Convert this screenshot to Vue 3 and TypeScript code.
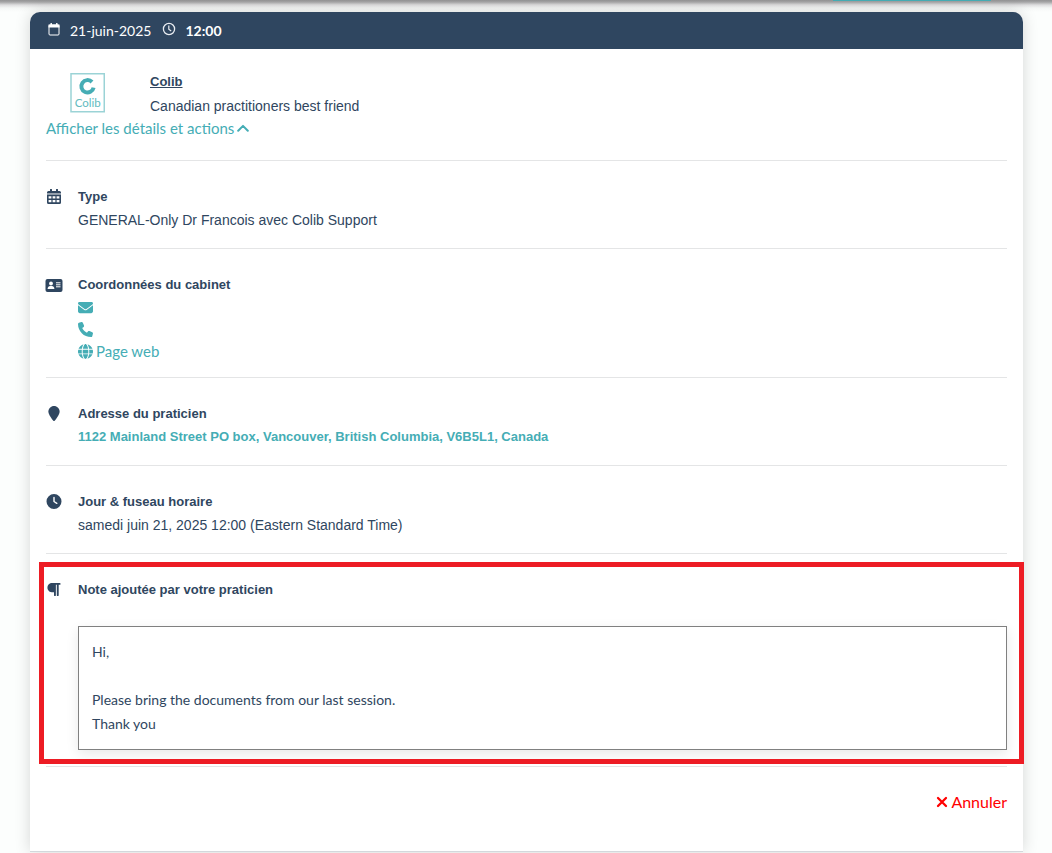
<script setup lang="ts">
import { ref } from 'vue'

interface Contact {
  kind: 'mail' | 'phone' | 'web'
  label: string
  text: string
}

const contacts: Contact[] = [
  { kind: 'mail', label: 'Courriel', text: '' },
  { kind: 'phone', label: 'Téléphone', text: '' },
  { kind: 'web', label: 'Page web', text: 'Page web' },
]

const open = ref(true)
const noteLines: string[] = ['Hi,', '', 'Please bring the documents from our last session.', 'Thank you']
</script>

<template>
  <div class="page">
    <div class="topbar"><span class="tab"></span></div>
    <main class="card">
      <header class="card-head">
        <svg class="head-cal" viewBox="0 0 12 13" aria-hidden="true">
          <rect x="1" y="2" width="10" height="10" rx="1" fill="none" stroke="#fff" stroke-width="1" />
          <path d="M0.5 1.500h11v3h-11zM2.500 0h1.400v2H2.500zM8.100 0h1.400v2H8.100z" fill="#fff" />
        </svg>
        <span class="date">21-juin-2025</span>
        <svg class="head-clock" viewBox="0 0 14 14" aria-hidden="true">
          <circle cx="7" cy="7" r="5.600" fill="none" stroke="#e9edf2" stroke-width="1.300" />
          <path d="M6.800 3.500v3.800l2.400 1.600" fill="none" stroke="#e9edf2" stroke-width="1.200" />
        </svg>
        <span class="time">12:00</span>
      </header>

      <div class="card-body">
        <section class="intro">
          <div class="who">
            <svg class="logo" viewBox="0 0 35 40" role="img" aria-label="Colib">
              <rect x="1" y="0.75" width="33.250" height="38" fill="#fff" stroke="#9bd3d6" stroke-width="1.500" />
              <path d="M22 9A6.200 6.200 0 1 0 23.600 14.600" fill="none" stroke="#46adb5" stroke-width="4" />
              <text x="17.800" y="33.500" text-anchor="middle" font-family="Lato, sans-serif" font-size="11.500" fill="#62bbc0">Colib</text>
            </svg>
            <div>
              <a class="name" href="#colib">Colib</a>
              <p class="value">Canadian practitioners best friend</p>
            </div>
          </div>
          <button class="toggle" type="button" :aria-expanded="open" @click="open = !open">
            Afficher les détails et actions
            <svg viewBox="0 0 12 8" class="chevron" aria-hidden="true"><path d="M1.200 6.700 6 1.900l4.800 4.800" fill="none" stroke="currentColor" stroke-width="2" stroke-linecap="round" stroke-linejoin="round" /></svg>
          </button>
        </section>

        <section class="row">
          <svg class="icon" viewBox="0 0 14 15" aria-hidden="true">
            <path fill="currentColor" fill-rule="evenodd" d="M3 0.800a1 1 0 0 1 2 0V2h4V0.800a1 1 0 0 1 2 0V2h1.500A1.500 1.500 0 0 1 14 3.500V4H0V3.500A1.500 1.500 0 0 1 1.500 2H3zM0 5.800h14v7.700a1.500 1.500 0 0 1-1.500 1.500h-11A1.500 1.500 0 0 1 0 13.500zM1.600 7.200v2.300h2.800v-2.300zM5.600 7.200v2.300h2.800v-2.300zM9.600 7.200v2.300h2.800v-2.300zM1.600 10.900v2.300h2.800v-2.300zM5.600 10.900v2.300h2.800v-2.300zM9.600 10.900v2.300h2.800v-2.300z" />
            <path fill="currentColor" opacity="0.500" d="M0 4h14v1.800H0z" />
          </svg>
          <div class="content">
            <h2>Type</h2>
            <p class="value">GENERAL-Only Dr Francois avec Colib Support</p>
          </div>
        </section>

        <section class="row contact">
          <svg class="icon wide" viewBox="0 0 18 14" aria-hidden="true">
            <rect x="0.500" y="0.500" width="17" height="13" rx="2" fill="currentColor" />
            <circle cx="6" cy="5" r="1.900" fill="#fff" />
            <path d="M2.600 10.500c0-1.800 1.200-2.900 2.600-2.900h1.600c1.400 0 2.600 1.100 2.600 2.900z" fill="#fff" />
            <path d="M11 4.300h4.500M11 6.300h4.500M11 8.300h4.500" stroke="#fff" stroke-width="1" />
          </svg>
          <div class="content">
            <h2>Coordonnées du cabinet</h2>
            <ul>
              <li v-for="c in contacts" :key="c.kind">
                <a :href="'#' + c.kind" :aria-label="c.label">
                  <svg class="mini" viewBox="0 0 512 512" aria-hidden="true">
                    <path v-if="c.kind === 'mail'" fill="currentColor" d="M48 64C21.500 64 0 85.500 0 112c0 15.100 7.100 29.300 19.200 38.400l217.600 163.200c11.400 8.500 27 8.500 38.400 0l217.600-163.200c12.100-9.100 19.200-23.300 19.200-38.400 0-26.500-21.500-48-48-48H48zM0 176v208c0 35.300 28.700 64 64 64h384c35.300 0 64-28.700 64-64V176L294.400 339.200c-22.800 17.100-54 17.100-76.800 0L0 176z" />
                    <path v-else-if="c.kind === 'phone'" fill="currentColor" d="M164.900 24.600c-7.700-18.600-28-28.500-47.400-23.200l-88 24C12.100 30.200 0 46 0 64c0 247.400 200.600 448 448 448 18 0 33.800-12.100 38.600-29.500l24-88c5.300-19.400-4.600-39.700-23.200-47.400l-96-40c-16.300-6.800-35.200-2.100-46.300 11.600L304.700 368C234.300 334.700 177.300 277.700 144 207.300l49.300-40.300c13.700-11.200 18.400-30 11.600-46.300l-40-96z" />
                    <path v-else fill="currentColor" d="M352 256c0 22.200-1.200 43.600-3.300 64H163.300c-2.200-20.400-3.300-41.800-3.300-64s1.200-43.600 3.300-64h185.400c2.200 20.400 3.300 41.800 3.300 64zm28.800-64h123.100c5.300 20.500 8.100 41.900 8.100 64s-2.800 43.500-8.100 64H380.800c2.100-20.600 3.200-42 3.200-64s-1.100-43.400-3.200-64zm112.600-32H376.700c-10-63.900-29.800-117.400-55.300-151.600 78.300 20.700 142 77.500 172 151.600zm-149.100 0H167.700c6.100-36.400 15.500-68.600 27-94.700 10.500-23.600 22.200-40.700 33.500-51.500C239.400 3.200 248.700 0 256 0s16.600 3.200 27.800 13.800c11.300 10.800 23 27.900 33.500 51.500 11.600 26 20.900 58.200 27 94.700zm-209 0H18.600C48.600 85.900 112.200 29.100 190.600 8.400 165.100 42.600 145.300 96.100 135.300 160zM8.100 192h123.100c-2.100 20.600-3.200 42-3.200 64s1.100 43.400 3.200 64H8.100C2.800 299.500 0 278.100 0 256s2.800-43.500 8.100-64zm186.600 254.600c-11.600-26-20.900-58.200-27-94.600h176.600c-6.100 36.400-15.500 68.600-27 94.600-10.500 23.600-22.200 40.700-33.500 51.500C272.600 508.800 263.300 512 256 512s-16.600-3.200-27.800-13.800c-11.300-10.800-23-27.900-33.500-51.600zM135.300 352c10 63.900 29.800 117.400 55.300 151.600C112.200 482.900 48.600 426.100 18.600 352h116.700zm358.100 0c-30 74.100-93.600 130.900-171.900 151.600 25.500-34.200 45.200-87.700 55.300-151.600h116.600z" />
                  </svg>
                  {{ c.text }}
                </a>
              </li>
            </ul>
          </div>
        </section>

        <section class="row">
          <svg class="icon" viewBox="0 0 384 512" aria-hidden="true"><path fill="currentColor" d="M384 192c0 87.400-117 243-168.300 307.200-12.300 15.300-35.100 15.300-47.400 0C117 435 0 279.400 0 192 0 86 86 0 192 0s192 86 192 192z" /></svg>
          <div class="content">
            <h2>Adresse du praticien</h2>
            <a class="address" href="#map">1122 Mainland Street PO box, Vancouver, British Columbia, V6B5L1, Canada</a>
          </div>
        </section>

        <section class="row">
          <svg class="icon" viewBox="0 0 512 512" aria-hidden="true"><path fill="currentColor" fill-rule="evenodd" d="M256 0a256 256 0 1 1 0 512 256 256 0 1 1 0-512zm-24 120v136c0 8 4 15.500 10.700 20l96 64c11 7.400 25.900 4.400 33.300-6.700s4.400-25.900-6.700-33.300L280 243.200V120c0-13.300-10.700-24-24-24s-24 10.700-24 24z" /></svg>
          <div class="content">
            <h2>Jour &amp; fuseau horaire</h2>
            <p class="value">samedi juin 21, 2025 12:00 (Eastern Standard Time)</p>
          </div>
        </section>

        <section class="row note">
          <svg class="icon" viewBox="0 0 448 512" aria-hidden="true"><path fill="currentColor" d="M192 32h224c17.700 0 32 14.300 32 32s-14.300 32-32 32h-32v352c0 17.700-14.300 32-32 32s-32-14.300-32-32V96h-32v352c0 17.700-14.300 32-32 32s-32-14.300-32-32v-96h-32C71.600 352 0 280.400 0 192S71.600 32 160 32h32z" /></svg>
          <div class="content">
            <h2>Note ajoutée par votre praticien</h2>
            <div class="note-box">
              <p v-for="(line, i) in noteLines" :key="i">{{ line }}</p>
            </div>
          </div>
        </section>

        <footer class="actions">
          <button class="cancel" type="button">
            <svg viewBox="0 0 12 12" class="cross" aria-hidden="true"><path d="M2 2l8 8M10 2l-8 8" stroke="currentColor" stroke-width="2.300" stroke-linecap="round" /></svg>
            Annuler
          </button>
        </footer>
      </div>
    </main>
  </div>
</template>

<style>
body {
  background: #fcfefd;
}
</style>

<style scoped>
.page {
  display: flex;
  flex-direction: column;
  color: #2f4660;
  font-family: "Liberation Sans", Arial, sans-serif;
  font-size: 14px;
  line-height: 24px;
  overflow: hidden;
}
h2, p, ul {
  margin: 0;
  padding: 0;
}
svg {
  flex: none;
}
a {
  color: #45adb5;
  text-decoration: none;
}
button {
  padding: 0;
  border: 0;
  background: none;
  cursor: pointer;
}
.topbar {
  display: flex;
  justify-content: flex-end;
  height: 12px;
  padding-right: 61px;
  background: linear-gradient(#939394, #a5a5a6 2px, #dededf 5px, #f5f7f6 8px, #fcfefd);
}
.tab {
  width: 158px;
  height: 1px;
  background: #45adb5;
}
.card {
  margin: 0 29px 1px 30px;
  border-bottom: 1px solid #d3d8dc;
  border-radius: 10px 10px 0 0;
  background: #fff;
  box-shadow: 0 0 16px rgba(0, 0, 0, 0.16);
}
.card-head {
  display: flex;
  align-items: center;
  height: 37px;
  padding: 0 18px;
  border-radius: 10px 10px 0 0;
  background: #2f4660;
  color: #fff;
  font-family: Lato, sans-serif;
}
.head-cal {
  width: 12px;
  height: 13px;
  margin: 0 10px 3px 0;
}
.head-clock {
  width: 14px;
  height: 14px;
  margin: 0 9px 3px 11px;
}
.time {
  font-weight: 700;
}
.card-body {
  padding: 0 16px;
}
.intro {
  padding: 21px 0 22px;
}
.who {
  display: flex;
}
.logo {
  width: 35px;
  height: 40px;
  margin: 3px 45px 0 24px;
}
.name {
  display: block;
  color: #2f4660;
  font-size: 13px;
  font-weight: 700;
  text-decoration: underline;
}
.toggle {
  display: flex;
  align-items: center;
  gap: 3px;
  color: #45adb5;
  font: 15px/20px Lato, sans-serif;
}
.chevron {
  width: 12px;
  height: 8px;
}
.row {
  display: flex;
  gap: 16px;
  padding: 24px 0 16px;
  border-top: 1px solid #e4e5e6;
}
.icon {
  width: 16px;
  height: 15px;
  margin-top: 4px;
}
.icon.wide {
  width: 18px;
  margin: 5px -1px 0;
}
.content {
  flex: 1;
  min-width: 0;
}
h2 {
  font-size: 13px;
  font-weight: 700;
  line-height: 23px;
}
.contact {
  padding-bottom: 15px;
}
.contact ul {
  list-style: none;
  font: 15px/22px Lato, sans-serif;
}
.contact a {
  display: flex;
  align-items: center;
  gap: 3px;
  width: max-content;
  height: 22px;
}
.mini {
  width: 15px;
  height: 15px;
}
.address {
  display: block;
  font-size: 13px;
  font-weight: 700;
}
.note {
  position: relative;
}
.note::after {
  content: "";
  position: absolute;
  inset: 8px -17px 2px -7px;
  border: 5px solid #ed1c24;
  pointer-events: none;
}
.note-box {
  margin-top: 25px;
  padding: 13px;
  border: 1px solid #808080;
  box-shadow: 0 4px 12px rgba(0, 0, 0, 0.09);
  font-family: Lato, sans-serif;
}
.note-box p {
  min-height: 24px;
}
.actions {
  display: flex;
  justify-content: flex-end;
  padding: 23px 0 37px;
  border-top: 1px solid #e4e5e6;
}
.cancel {
  display: flex;
  align-items: center;
  gap: 3px;
  color: #f00;
  font: 16px/24px Lato, sans-serif;
}
.cross {
  width: 12px;
  height: 12px;
}
</style>
